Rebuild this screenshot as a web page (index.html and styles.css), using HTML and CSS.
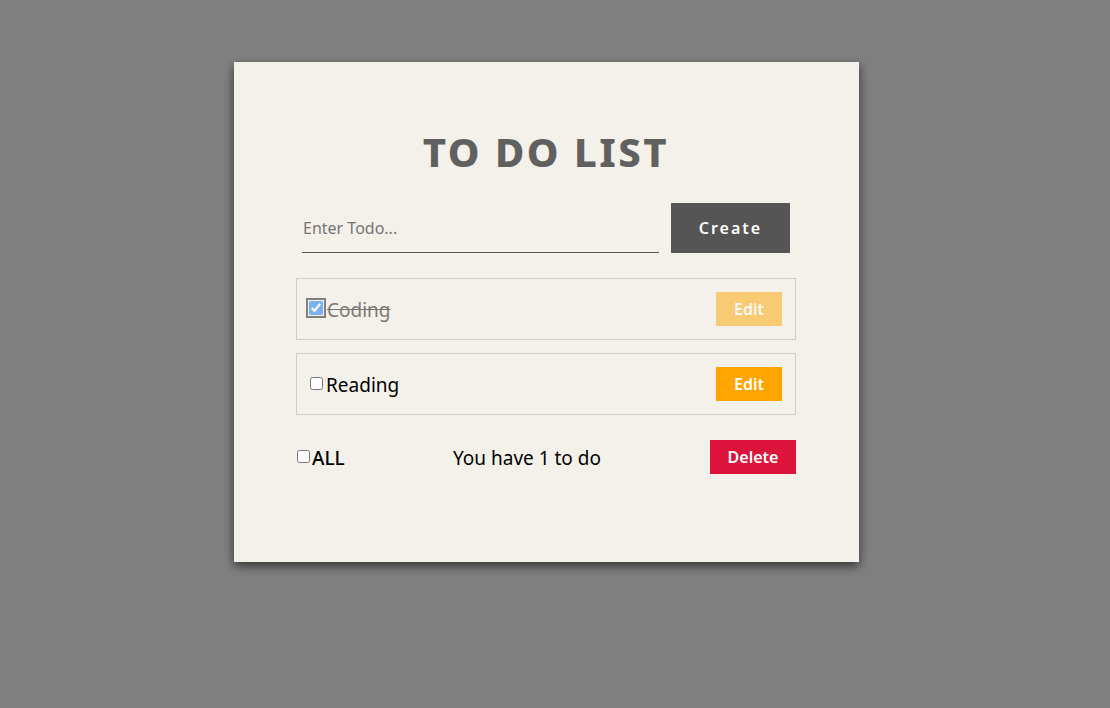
FILE: index.html
```html
<!DOCTYPE html>
<html>
<head>
<meta charset="utf-8">
<link rel="stylesheet" href="styles.css">
</head>
<body>
<div class="card">
  <h1 class="title">TO DO LIST</h1>
  <div class="entry">
    <input class="todo-input" type="text" placeholder="Enter Todo...">
    <button class="create">Create</button>
  </div>
  <ul class="list">
    <li class="item done">
      <label class="item-label"><input type="checkbox" class="check" checked><span>Coding</span></label>
      <button class="edit" disabled>Edit</button>
    </li>
    <li class="item">
      <label class="item-label"><input type="checkbox" class="check"><span>Reading</span></label>
      <button class="edit">Edit</button>
    </li>
  </ul>
  <div class="footer">
    <label class="all"><input type="checkbox" class="check">ALL</label>
    <span class="count">You have 1 to do</span>
    <button class="delete">Delete</button>
  </div>
</div>
</body>
</html>
```
FILE: styles.css
```css
html, body {
  margin: 0;
  padding: 0;
  background: #808080;
  font-family: "Noto Sans", "Open Sans", sans-serif;
}
body {
  padding-top: 62px;
  height: 708px;
  box-sizing: border-box;
}
.card {
  width: 625px;
  height: 500px;
  margin-left: 234px;
  box-sizing: border-box;
  background: #f4f1ea;
  box-shadow: 0 4px 10px rgba(0,0,0,0.6);
  padding: 66px 63px 0 62px;
}
.title {
  margin: 0;
  text-align: center;
  font-size: 40px;
  line-height: 48px;
  font-weight: 800;
  letter-spacing: 2.5px;
  color: #606060;
}
.entry {
  display: flex;
  align-items: stretch;
  margin: 27px 6px 0 6px;
  gap: 12px;
  height: 50px;
}
.todo-input {
  flex: 1;
  border: none;
  border-bottom: 1px solid #555;
  background: transparent;
  font-family: inherit;
  font-size: 16px;
  padding: 0 1px;
  outline: none;
  color: #333;
}
.todo-input::placeholder {
  color: #757575;
}
.create {
  width: 119px;
  border: none;
  background: #555555;
  color: #fff;
  font-family: inherit;
  font-size: 16px;
  font-weight: 600;
  letter-spacing: 2px;
}
.list {
  list-style: none;
  margin: 25px 0 0 0;
  padding: 0;
  display: flex;
  flex-direction: column;
  gap: 13px;
}
.item {
  height: 62px;
  box-sizing: border-box;
  border: 1px solid #cccccc;
  display: flex;
  align-items: center;
  justify-content: space-between;
  padding: 0 13px 0 13px;
}
.item-label {
  display: flex;
  align-items: center;
  font-size: 19px;
  color: #000;
  padding-top: 2px;
}
.check {
  margin: 0;
  width: 13px;
  height: 13px;
}
.item-label .check {
  margin-right: 3px;
  margin-top: -4px;
}
.done .item-label {
  opacity: 0.5;
}
.done .item-label span {
  text-decoration: line-through;
}
.done .check {
  width: 14px;
  height: 14px;
  margin-left: -1px;
  margin-right: 4px;
  outline: 2px solid #111;
  outline-offset: 1px;
  border-radius: 2px;
}
.edit {
  width: 66px;
  height: 34px;
  border: none;
  background: #ffa500;
  color: #fff;
  font-family: inherit;
  font-size: 16px;
  font-weight: 600;
}
.edit:disabled {
  opacity: 0.5;
}
.footer {
  display: flex;
  align-items: center;
  margin-top: 25px;
  height: 34px;
}
.all {
  display: flex;
  align-items: center;
  font-size: 19px;
  font-weight: 500;
  color: #000;
  width: 157px;
  padding-top: 1px;
}
.all .check {
  margin-left: 1px;
  margin-right: 2px;
  margin-top: -3px;
}
.count {
  font-size: 19px;
  color: #000;
  flex: 1;
  padding-top: 1px;
}
.delete {
  width: 86px;
  height: 34px;
  border: none;
  background: #dc143c;
  color: #fff;
  font-family: inherit;
  font-size: 16px;
  font-weight: 600;
}
```
